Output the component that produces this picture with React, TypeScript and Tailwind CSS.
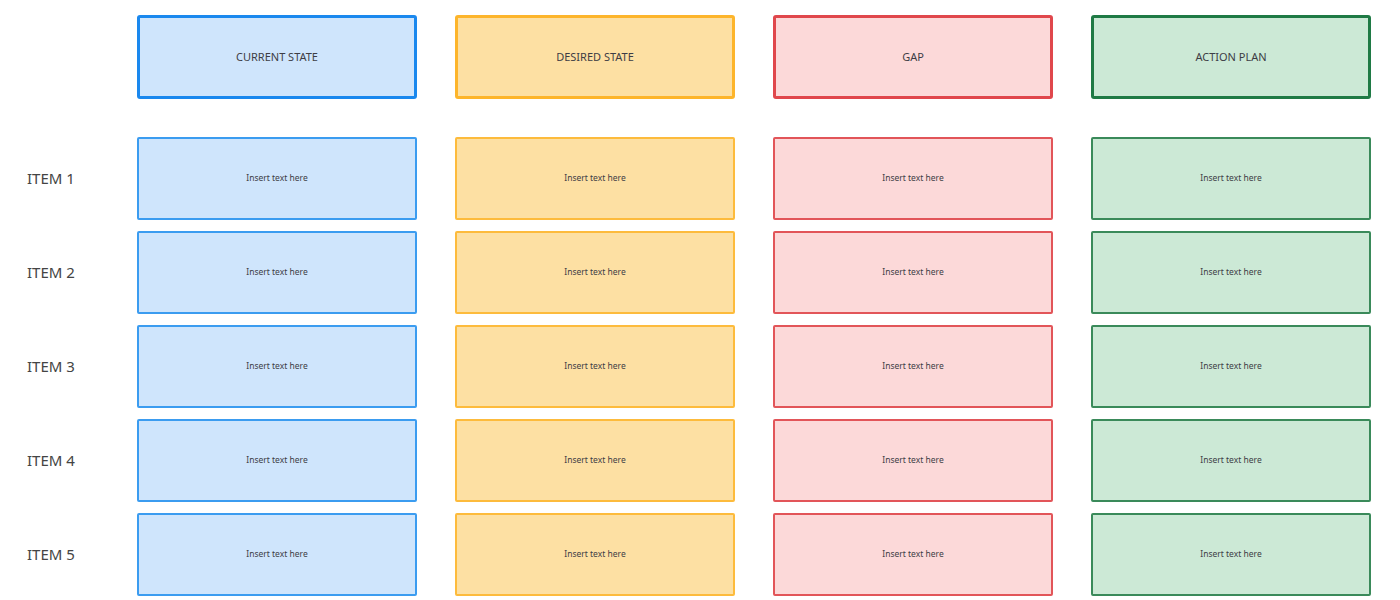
const cols = [
  { title: 'CURRENT STATE', head: 'border-[3px] border-[#1a88ee] bg-[#cfe5fc]', cell: 'border-2 border-[#3b9cf0] bg-[#cfe5fc]' },
  { title: 'DESIRED STATE', head: 'border-[3px] border-[#fdb52b] bg-[#fde0a3]', cell: 'border-2 border-[#fdbb3c] bg-[#fde0a3]' },
  { title: 'GAP', head: 'border-[3px] border-[#e0474c] bg-[#fcd9d9]', cell: 'border-2 border-[#e25559] bg-[#fcd9d9]' },
  { title: 'ACTION PLAN', head: 'border-[3px] border-[#1f7a45] bg-[#cce9d6]', cell: 'border-2 border-[#3a8a5a] bg-[#cce9d6]' },
];

const items = ['ITEM 1', 'ITEM 2', 'ITEM 3', 'ITEM 4', 'ITEM 5'];

export default function App() {
  return (
    <div className="w-[1400px] h-[600px] bg-white pt-[15px] text-[#3d3d45]" style={{ fontFamily: '"Noto Sans", "Open Sans", sans-serif' }}>
      <div className="flex">
        <div className="w-[137px] shrink-0" />
        <div className="flex gap-[38px]">
          {cols.map((c) => (
            <div key={c.title} className={`w-[280px] h-[84px] rounded-[3px] flex items-center justify-center text-[11px] ${c.head}`}>
              {c.title}
            </div>
          ))}
        </div>
      </div>
      <div className="mt-[38px] flex flex-col gap-[11px]">
        {items.map((it) => (
          <div key={it} className="flex">
            <div className="w-[137px] shrink-0 pl-[27px] flex items-center text-[15px] text-[#444]">{it}</div>
            <div className="flex gap-[38px]">
              {cols.map((c) => (
                <div key={c.title} className={`w-[280px] h-[83px] rounded-[2px] flex items-center justify-center text-[8.5px] ${c.cell}`}>
                  Insert text here
                </div>
              ))}
            </div>
          </div>
        ))}
      </div>
    </div>
  );
}
